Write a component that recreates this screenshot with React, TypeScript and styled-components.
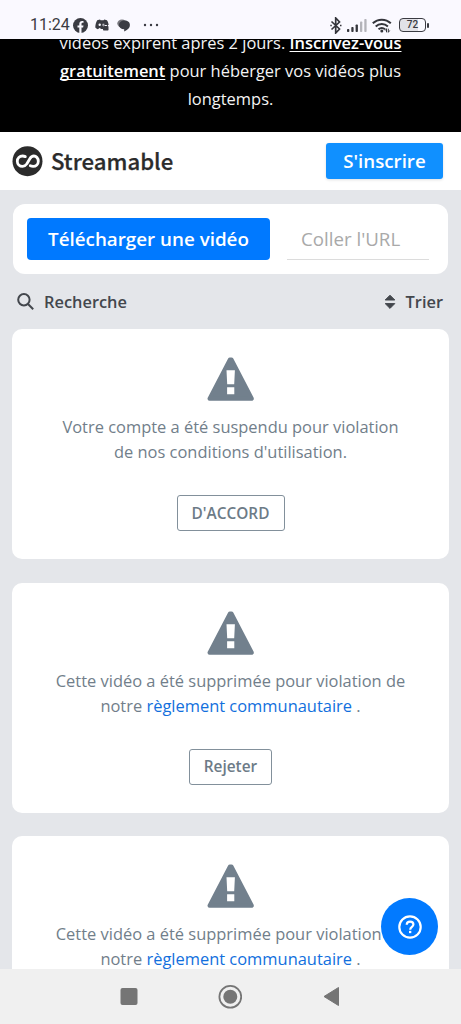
import React from "react";
import styled, { createGlobalStyle } from "styled-components";

const GlobalStyle = createGlobalStyle`
  * { box-sizing: border-box; }
  html, body { margin: 0; padding: 0; }
  body { background: #e4e6ea; font-family: "Open Sans", sans-serif; overflow: hidden; }
  button { font-family: inherit; padding: 0; margin: 0; cursor: pointer; }
`;

const Screen = styled.div`
  position: relative;
  width: 461px;
  height: 1024px;
  display: flex;
  flex-direction: column;
  overflow: hidden;
  background: #e4e6ea;
`;

const StatusBar = styled.div`
  height: 39px;
  flex: none;
  display: flex;
  justify-content: space-between;
  align-items: flex-start;
  padding: 14px 32px 0 30px;
  background: #faf9ff;
  color: #3a3b42;
`;

const StatusGroup = styled.div`
  height: 22px;
  display: flex;
  align-items: center;
`;

const Clock = styled.span`
  width: 43px;
  font: 400 16px/22px Roboto, sans-serif;
  white-space: nowrap;
`;

const Banner = styled.div`
  height: 93px;
  flex: none;
  display: flex;
  flex-direction: column;
  justify-content: flex-end;
  padding-bottom: 19px;
  overflow: hidden;
  background: #000;
  color: #f4f4f4;
  text-align: center;
  font-size: 16.45px;
  line-height: 28px;
`;

const TextLine = styled.div`
  white-space: nowrap;
`;

const BannerLink = styled.a`
  font-weight: 600;
  color: #fff;
  text-decoration: underline;
  text-decoration-skip-ink: none;
  text-decoration-thickness: 1px;
  text-underline-offset: 2px;
`;

const Header = styled.header`
  height: 58px;
  flex: none;
  display: flex;
  align-items: center;
  justify-content: space-between;
  padding: 0 18px 0 12px;
  background: #fff;
`;

const Brand = styled.div`
  display: flex;
  align-items: center;
  gap: 8px;
`;

const BrandName = styled.span`
  margin-top: -3px;
  font: 500 22.2px/30px "Noto Sans CJK SC", sans-serif;
  color: #2b2b2b;
  -webkit-text-stroke: 0.25px #2b2b2b;
`;

const SignUp = styled.button`
  width: 117px;
  height: 36px;
  border: 0;
  border-radius: 3px;
  background: #1090ff;
  color: #fff;
  font-size: 18.7px;
  font-weight: 600;
  line-height: 36px;
  box-shadow: 0 1px 3px rgba(0, 0, 0, 0.12);
`;

const Upload = styled.section`
  height: 70px;
  flex: none;
  display: flex;
  gap: 17px;
  margin: 14px 13px 0;
  padding: 14px 19px 0 14px;
  border-radius: 12px;
  background: #fff;
`;

const UploadButton = styled.button`
  width: 243px;
  height: 42px;
  border: 0;
  border-radius: 4px;
  background: #0079ff;
  color: #fff;
  font-size: 18.8px;
  font-weight: 600;
  line-height: 42px;
  white-space: nowrap;
`;

const UrlField = styled.div`
  width: 142px;
  height: 42px;
  padding-left: 14px;
  border-bottom: 1px solid #dcdcdc;
  color: #a9a9a9;
  font-size: 18.7px;
  line-height: 41px;
  white-space: nowrap;
`;

const Tools = styled.div`
  height: 55px;
  flex: none;
  display: flex;
  align-items: center;
  justify-content: space-between;
  padding: 0 18px 0 17px;
  color: #43474d;
  font-size: 16.4px;
  font-weight: 600;
`;

const Tool = styled.div<{ $gap: number }>`
  display: flex;
  align-items: center;
  gap: ${(p) => p.$gap}px;
`;

const Feed = styled.main`
  flex: 1;
  min-height: 0;
  overflow: hidden;
  display: flex;
  flex-direction: column;
  gap: 23.6px;
  padding: 0 12px;
`;

const Card = styled.article`
  height: 230px;
  flex: none;
  display: flex;
  flex-direction: column;
  align-items: center;
  padding-top: 28px;
  border-radius: 10px;
  background: #fff;
`;

const Message = styled.div`
  margin-top: 12px;
  color: #717e8a;
  text-align: center;
  font-size: 16.45px;
  line-height: 25px;
`;

const RuleLink = styled.a`
  color: #126fdd;
`;

const Dismiss = styled.button<{ $width: number }>`
  width: ${(p) => p.$width}px;
  height: 36px;
  margin-top: 31px;
  border: 1px solid #82909b;
  border-radius: 3px;
  background: #fff;
  color: #6d7b87;
  font-size: 15.4px;
  font-weight: 600;
  line-height: 33px;
`;

const Help = styled.button`
  position: absolute;
  left: 381px;
  top: 898px;
  width: 57px;
  height: 57px;
  display: flex;
  align-items: center;
  justify-content: center;
  border: 0;
  border-radius: 50%;
  background: #027aff;
`;

const NavBar = styled.nav`
  height: 55px;
  flex: none;
  display: flex;
  justify-content: center;
  align-items: center;
  gap: 77px;
  padding-right: 1px;
  background: #f0f0f0;
`;

const NavItem = styled.div`
  width: 24px;
  height: 24px;
`;

const FacebookIcon = () => (
  <svg width="15" height="15" viewBox="0 0 15 15">
    <circle cx="7.5" cy="7.5" r="7.5" fill="#3a3b42" />
    <path d="M6.3 15V9.6H4.5V7.5h1.8V6c0-2 1.1-3 2.9-3 .7 0 1.3.1 1.3.1v1.7h-.8c-.9 0-1.2.5-1.2 1.2v1.5h2l-.4 2.1H8.5V15z" fill="#faf9ff" />
  </svg>
);

const DiscordIcon = () => (
  <svg width="14" height="12" viewBox="0 0 14 12">
    <path d="M2.2 1.3 5 .4l.6.8h3l.7-.8 2.6.9c1 1.4 1.6 3 1.7 4.7H8v4H5.8L5 8.8 2.8 10.3C1.8 10 .9 9.3.3 8.6.3 6 .9 3.6 2.2 1.3z" fill="#3a3b42" />
    <circle cx="4.7" cy="5.8" r="1.2" fill="#faf9ff" />
    <path d="M7.6 4.800h2.200v2H7.600z" fill="#faf9ff" />
    <rect x="8" y="7" width="5.5" height="4.5" rx=".7" fill="#3a3b42" />
    <path d="M9 7V6a1.7 1.7 0 0 1 3.4 0v1" fill="none" stroke="#3a3b42" />
  </svg>
);

const ChatIcon = () => (
  <svg width="14" height="13" viewBox="0 0 14 13">
    <ellipse cx="5" cy="4.5" rx="4.7" ry="4" fill="#77777d" />
    <path d="M7.5 1.5c3.3 0 5.4 1.8 5.4 4.4 0 2.7-1.6 4.6-5.7 6.6V10.3C4 10.3 2 8.5 2 6c0-2.6 2.3-4.5 5.5-4.5z" fill="#3a3b42" />
  </svg>
);

const Dots = () => (
  <svg width="16" height="4" viewBox="0 0 16 4" fill="#3a3b42">
    <circle cx="2" cy="2" r="1.2" />
    <circle cx="8" cy="2" r="1.2" />
    <circle cx="14" cy="2" r="1.2" />
  </svg>
);

const NotificationIcons = styled.div`
  display: flex;
  align-items: center;
  svg:nth-child(2) { margin-left: 7px; }
  svg:nth-child(3) { margin-left: 8px; }
  svg:nth-child(4) { margin-left: 12px; }
`;

const BluetoothIcon = () => (
  <svg width="12" height="17" viewBox="0 0 12 17">
    <path d="M1.5 4.5l8 7.5-3.800 4V1l3.800 4-8 7.500" fill="none" stroke="#34353b" strokeWidth="1.7" />
    <path d="M.3 8.500h1.500M10 8.500h1.500" stroke="#34353b" strokeWidth="1.4" />
  </svg>
);

const SignalIcon = () => (
  <svg width="20" height="13" viewBox="0 0 20 13">
    <g fill="#34353b">
      <rect x="0" y="10" width="2.3" height="3" rx=".8" />
      <rect x="4.3" y="8" width="2.3" height="5" rx=".8" />
      <rect x="8.6" y="5.5" width="2.3" height="7.5" rx=".8" />
    </g>
    <g fill="#b4b4ba">
      <rect x="13" y="2.5" width="2.3" height="10.5" rx=".8" />
      <rect x="17.3" y="0" width="2.3" height="13" rx=".8" />
    </g>
  </svg>
);

const WifiIcon = () => (
  <svg width="20" height="15" viewBox="0 0 20 15">
    <g fill="none" stroke="#34353b" strokeWidth="2">
      <path d="M.8 5.300a13 13 0 0 1 18 0" />
      <path d="M3.7 8.400a9 9 0 0 1 12.200 0" />
      <path d="M6.5 11.300a5.200 5.200 0 0 1 6.600 0" />
    </g>
    <circle cx="9.8" cy="13" r="1.5" fill="#34353b" />
    <path d="M13.2 12.500l1.300-1.800v3.600M16.300 10.700v3.600l1.400-1.800" fill="none" stroke="#34353b" />
  </svg>
);

const SystemIcons = styled.div`
  display: flex;
  align-items: center;
  gap: 5px;
`;

const Battery = styled.div`
  position: relative;
  width: 27px;
  height: 14px;
  margin: 0 3px 0 2px;
  border: 1.5px solid #3a3b42;
  border-radius: 4px;
  background: linear-gradient(90deg, #e2e2e7 72%, #faf9ff 72%);
  font: 500 10px/12px Roboto, sans-serif;
  text-align: center;
  &::after {
    content: "";
    position: absolute;
    right: -4px;
    top: 3.5px;
    width: 2px;
    height: 5px;
    border-radius: 1px;
    background: #3a3b42;
  }
`;

const StreamableLogo = () => (
  <svg width="31" height="31" viewBox="0 0 31 31">
    <circle cx="15.5" cy="15.2" r="15" fill="#2b2b2b" />
    <path
      d="M13.3 10.600C12.400 10.200 11.500 10 10.600 10c-3 0-5.300 2.300-5.300 5.200s2.300 5.200 5.300 5.200c1.900 0 3.100-.9 4.300-2.600l2.800-4.800c1-1.800 2.200-3 4.200-3 2.300 0 4.400 2.300 4.400 5.200s-2.300 5.200-5.200 5.200c-1 0-1.900-.2-2.800-.6"
      fill="none" stroke="#fff" strokeWidth="2.8" strokeLinecap="round"
    />
  </svg>
);

const SearchIcon = () => (
  <svg width="17" height="17" viewBox="0 0 17 17" fill="none" stroke="#43474d" strokeWidth="2">
    <circle cx="6.9" cy="6.7" r="5.7" />
    <path d="M11 11l5.200 5.200" />
  </svg>
);

const SortIcon = () => (
  <svg width="12" height="16" viewBox="0 0 12 16" fill="#43474d" stroke="#43474d" strokeLinejoin="round">
    <path d="M6 1.200 10.800 6H1.200z" />
    <path d="M6 14.400 10.800 9.600H1.200z" />
  </svg>
);

const WarningIcon = () => (
  <svg width="48" height="45" viewBox="0 0 48 45">
    <path d="M22.900 2.500h1.600L44.900 41.700H2.500z" fill="#72808d" stroke="#72808d" strokeWidth="4" strokeLinejoin="round" />
    <path d="M19.500 13.200h8.400l-.7 14h-7zM20.100 30.300h7.200v6.900h-7.200z" fill="#fff" />
  </svg>
);

const HelpIcon = () => (
  <svg width="24" height="24" viewBox="0 0 24 24" fill="none" stroke="#fff" strokeWidth="2.2">
    <circle cx="12" cy="12" r="10.7" />
    <path d="M8.700 9.800c.1-2 1.500-3.100 3.400-3.100 2 0 3.300 1.200 3.300 2.800 0 2.300-3.200 2.500-3.200 5.200" />
    <path d="M11 17h2.300" strokeWidth="2.3" />
  </svg>
);

const Rules = () => <RuleLink>règlement communautaire</RuleLink>;

const notices = [
  { id: "account", first: "Votre compte a été suspendu pour violation", second: <>de nos conditions d'utilisation.</>, action: "D'ACCORD", width: 108 },
  { id: "video-1", first: "Cette vidéo a été supprimée pour violation de", second: <>notre <Rules /> .</>, action: "Rejeter", width: 83 },
  { id: "video-2", first: "Cette vidéo a été supprimée pour violation de", second: <>notre <Rules /> .</>, action: "Rejeter", width: 83 },
];

export default function App() {
  return (
    <Screen>
      <GlobalStyle />
      <StatusBar>
        <StatusGroup>
          <Clock>11:24</Clock>
          <NotificationIcons>
            <FacebookIcon />
            <DiscordIcon />
            <ChatIcon />
            <Dots />
          </NotificationIcons>
        </StatusGroup>
        <StatusGroup>
          <SystemIcons>
            <BluetoothIcon />
            <SignalIcon />
            <WifiIcon />
            <Battery>72</Battery>
          </SystemIcons>
        </StatusGroup>
      </StatusBar>
      <Banner>
        <TextLine>vidéos expirent après 2 jours. <BannerLink>Inscrivez-vous</BannerLink></TextLine>
        <TextLine><BannerLink>gratuitement</BannerLink> pour héberger vos vidéos plus</TextLine>
        <TextLine>longtemps.</TextLine>
      </Banner>
      <Header>
        <Brand>
          <StreamableLogo />
          <BrandName>Streamable</BrandName>
        </Brand>
        <SignUp>S'inscrire</SignUp>
      </Header>
      <Upload>
        <UploadButton>Télécharger une vidéo</UploadButton>
        <UrlField>Coller l'URL</UrlField>
      </Upload>
      <Tools>
        <Tool $gap={10}><SearchIcon />Recherche</Tool>
        <Tool $gap={10}><SortIcon />Trier</Tool>
      </Tools>
      <Feed>
        {notices.map((n) => (
          <Card key={n.id}>
            <WarningIcon />
            <Message>
              <TextLine>{n.first}</TextLine>
              <TextLine>{n.second}</TextLine>
            </Message>
            <Dismiss $width={n.width}>{n.action}</Dismiss>
          </Card>
        ))}
      </Feed>
      <NavBar>
        <NavItem>
          <svg width="24" height="24" viewBox="0 0 24 24"><rect x="3.5" y="3" width="17" height="17" rx="2" fill="#757575" /></svg>
        </NavItem>
        <NavItem>
          <svg width="24" height="24" viewBox="0 0 24 24"><circle cx="12.300" cy="11.800" r="10.900" fill="none" stroke="#757575" strokeWidth="1.8" /><circle cx="12.300" cy="11.800" r="7" fill="#757575" /></svg>
        </NavItem>
        <NavItem>
          <svg width="24" height="24" viewBox="0 0 24 24"><path d="M19.500 2.500v18L5 11.500z" fill="#757575" stroke="#757575" strokeLinejoin="round" /></svg>
        </NavItem>
      </NavBar>
      <Help aria-label="Aide"><HelpIcon /></Help>
    </Screen>
  );
}
